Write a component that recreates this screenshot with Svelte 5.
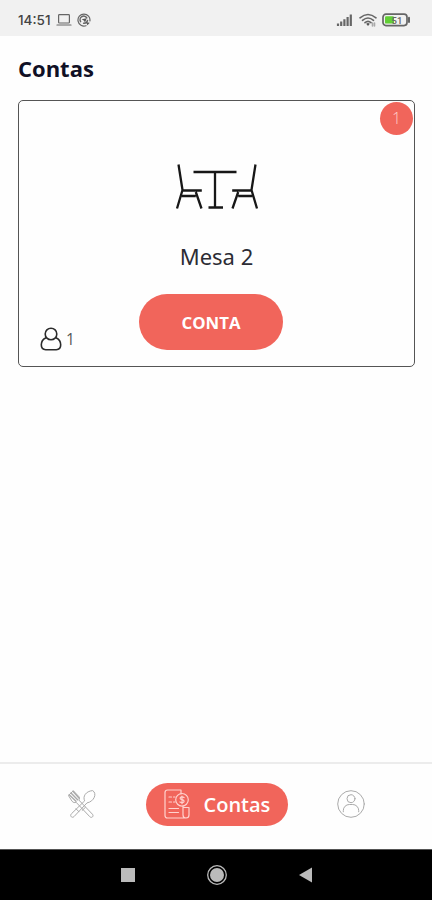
<script lang="ts">
  // Contas: lista de mesas com conta aberta

  type Mesa = { nome: string; pessoas: number; pedidos: number }
  type Aba = 'cardapio' | 'contas' | 'perfil'

  let mesas = $state<Mesa[]>([{ nome: 'Mesa 2', pessoas: 1, pedidos: 1 }])
  let aba = $state<Aba>('contas')
</script>

<div class="screen">
  <!-- Barra de status -->
  <header class="status">
    <span class="time">14:51</span>
    <svg class="laptop" width="16" height="14" viewBox="0 0 16 14">
      <rect x="2.6" y="1.6" width="10.8" height="8.4" rx="0.8" />
      <path d="M1 12h14" />
    </svg>
    <svg class="sync" width="14" height="14" viewBox="0 0 14 14">
      <path d="M9 12.7A6 6 0 1 1 12.9 8" />
      <path class="thick" d="M3.6 8.6A3.6 3.6 0 0 1 9.8 4.8M10.5 7.4A3.6 3.6 0 0 1 6.6 10.3" />
      <path class="solid" d="M4.7 6.2l5-1-1.7 4.5-.9-2zM9.2 9.2l3.6.6-2.4 2.4z" />
    </svg>

    <div class="status-right">
      <svg width="18" height="14" viewBox="0 0 18 14">
        <path class="bars" d="M2 10.5V13M5.2 8.5V13M8.4 6.3V13M11.6 4V13M14.8 1.5V13" />
      </svg>
      <svg class="wifi" width="18" height="14" viewBox="0 0 18 14">
        <path d="M1 4.8Q9-1.8 17 4.8M3.5 7.3Q9 2.7 14.5 7.3M6 9.7Q9 7 12 9.7" />
        <path class="solid" d="M7.2 10.7Q9 9.3 10.8 10.7L9 13z" />
        <path class="faint" d="M13.5 10v3M15.5 10v3" />
      </svg>
      <svg class="battery" width="29" height="14" viewBox="0 0 29 14">
        <rect class="case" x="1" y="1.2" width="24" height="11.4" rx="3" />
        <rect class="level" x="3" y="3.2" width="9" height="7.4" rx="1.2" />
        <path class="tip" d="M27 4.8v4.2" />
        <text x="9.6" y="10.6">51</text>
      </svg>
    </div>
  </header>

  <main>
    <h1>Contas</h1>

    {#each mesas as mesa}
      <article class="card">
        <span class="badge">{mesa.pedidos}</span>

        <svg class="table" width="84" height="48" viewBox="0 0 84 48">
          <path d="M18.5 9h43M40 9v35.500M33.500 44.500h14.500" />
          <path d="M3.500 1.500L7.500 27 2 45.500M6.800 27.500h20M6.800 33h14M20.800 29l5.700 16.500" />
          <path d="M80.500 1.500l-4 25.500L82 45.500M77.200 27.500H57.200M77.200 33h-14M63.200 29L57.500 45.500" />
        </svg>

        <h2>{mesa.nome}</h2>
        <button class="conta">CONTA</button>

        <div class="people">
          <svg width="22" height="24" viewBox="0 0 22 24">
            <circle cx="11" cy="7" r="5.8" />
            <path d="M5.6 10.9C3.2 12 1.3 14.4 1.3 17.8c0 3.3 1.7 4.9 4.4 4.9h10.6c2.7 0 4.4-1.6 4.4-4.9 0-3.4-1.9-5.8-4.3-6.9" />
          </svg>
          <span>{mesa.pessoas}</span>
        </div>
      </article>
    {/each}
  </main>

  <!-- Abas -->
  <nav class="tabs">
    <button class="tab" class:active={aba === 'cardapio'} aria-label="Cardápio" onclick={() => (aba = 'cardapio')}>
      <svg width="28" height="28" viewBox="0 0 28 28">
        <path class="prongs" d="M1.2 4.8l6.8 6.4M3 3l6.6 6.7M5 1.2l6.2 7" />
        <path d="M.7 5.2L5.3.8l5.5 5.7c1 1.4.8 2.6 0 3.500l13.600 14.200c1.800 1.900-.7 4.400-2.600 2.500L8 12.200c-1.600.8-2.700.3-3.600-.6z" />
        <path d="M16.500 10.500c-2-3.800 1.200-9.400 8.200-9.900 4.600 2.800 1.500 11-5.700 12.300L6 26.600c-1.900 1.900-4.700-.7-2.800-2.600z" />
        <path d="M17.400 17.300l-3.200 3.100M8 18.800l3 3" />
      </svg>
    </button>

    <button class="tab pill" class:active={aba === 'contas'} onclick={() => (aba = 'contas')}>
      <svg width="26" height="30" viewBox="0 0 26 30">
        <path d="M17 5V1H3.500C2 1 1 2 1 3.500V26.500C1 28 2 29 3.500 29H22c1.800 0 3-1.200 3-3V18.500h-6V26c0 1.800 1.200 3 3 3M19 18.500V17" />
        <path d="M5 8h2.500M9.500 8h1.500M5 13h2.500M9.500 13h1.500M5 19.500h9.500M5 23.500h9.500" />
        <circle cx="18" cy="10.800" r="6.300" />
        <path d="M20.100 8.500c-1.600-1.200-4-.6-4 .8 0 1.900 4 .9 4 2.900 0 1.500-2.500 1.900-4.200.8M18 7v7.700" />
      </svg>
      <span>Contas</span>
    </button>

    <button class="tab" class:active={aba === 'perfil'} aria-label="Perfil" onclick={() => (aba = 'perfil')}>
      <svg width="28" height="28" viewBox="0 0 28 28">
        <circle cx="14" cy="14" r="13.300" />
        <circle cx="14" cy="8.700" r="4" />
        <path d="M6.300 21.800v-1.300a6 6 0 0 1 6-6h3.400a6 6 0 0 1 6 6v1.300" />
      </svg>
    </button>
  </nav>

  <!-- Botões do sistema -->
  <footer class="system">
    <svg width="20" height="20" viewBox="0 0 20 20"><rect x="3" y="3" width="14" height="14" /></svg>
    <svg width="20" height="20" viewBox="0 0 20 20">
      <circle cx="10" cy="10" r="7" />
      <circle class="ring" cx="10" cy="10" r="9.300" />
    </svg>
    <svg width="20" height="20" viewBox="0 0 20 20"><path d="M3 10L16 2.500V17.500z" /></svg>
  </footer>
</div>

<style>
  :global(body) { background: #fff; }
  .screen {
    display: flex; flex-direction: column; width: 432px; height: 900px; overflow: hidden;
    background: #fefefe; font-family: 'Open Sans', 'Noto Sans', sans-serif; color: #101025;
  }
  svg { display: block; flex-shrink: 0; fill: none; stroke-linecap: round; stroke-linejoin: round; }
  button { border: 0; padding: 0; background: none; font-family: inherit; cursor: pointer; }

  .status {
    display: flex; align-items: center; flex-shrink: 0; box-sizing: border-box;
    height: 36px; padding: 3px 21px 0 18px; background: #f1f1f1;
  }
  .time { width: 38px; font: 500 13.5px/16px Inter, sans-serif; letter-spacing: 0; color: #444; }
  .status svg { stroke: #666; stroke-width: 1.2; }
  .sync { margin-left: 5px; }
  .status .thick { stroke-width: 1.5; }
  .status .solid { fill: #555; stroke: none; }
  .status-right { display: flex; align-items: center; gap: 5px; margin-left: auto; }
  .status .bars { stroke-width: 2.2; stroke-linecap: butt; }
  .faint { stroke: #aaa; }
  .status .wifi { stroke-width: 1.6; }
  .battery .case { stroke-width: 1.7; }
  .battery .level { fill: #62cf35; stroke: none; }
  .battery .tip { stroke-width: 2; }
  .battery text { font: 500 9.5px Roboto, sans-serif; fill: #666; stroke: none; }

  main { flex: 1; padding: 17px 17px 0 18px; }
  h1 { margin: 0 0 17px; font-size: 22px; line-height: 30px; font-weight: 700; }

  .card {
    position: relative; display: flex; flex-direction: column; align-items: center;
    box-sizing: border-box; height: 267px; padding-top: 62px;
    border: 1.5px solid #555; border-radius: 5px;
  }
  .badge {
    position: absolute; top: 1px; right: 1px; width: 33px; height: 33px; border-radius: 50%;
    background: #f1655b; color: #ffd0cb; font-size: 16px; line-height: 33px; text-align: center; font-weight: 300;
  }
  .table { stroke: #171717; stroke-width: 2.3; stroke-linecap: butt; }
  h2 { margin: 29px 0 22px; font: 400 22px/32px 'Noto Sans', sans-serif; color: #2c2c34; }
  .conta {
    width: 144px; height: 56px; margin-right: 11px; border-radius: 28px; background: #f1655b;
    color: #fff; font-size: 16.8px; font-weight: 700;
  }
  .people { position: absolute; left: 21px; bottom: 15px; display: flex; align-items: center; gap: 4px; }
  .people svg { stroke: #2b2b2b; stroke-width: 1.6; }
  .people span { font-size: 15.5px; line-height: 24px; color: #555; }

  .tabs {
    display: flex; align-items: center; justify-content: space-between; flex-shrink: 0;
    box-sizing: border-box; height: 87px; padding: 0 67px 5px 68px; border-top: 2px solid #ececec;
  }
  .tab svg { stroke: #aaa; stroke-width: 1; }
  .tab .prongs { stroke-width: 1.4; }
  .pill {
    display: flex; align-items: center; gap: 14px; box-sizing: border-box;
    width: 142px; height: 43px; padding-left: 18px; border-radius: 22px;
    color: #fff; font-size: 20px; font-weight: 600;
  }
  .pill.active { background: #f1655b; }
  .pill svg { stroke: #ffd2ce; stroke-width: 1.2; }

  .system {
    display: flex; align-items: center; justify-content: center; gap: 69px; flex-shrink: 0;
    box-sizing: border-box; height: 51px; padding-left: 2px; border-top: 1px solid #555; background: #000;
  }
  .system svg { fill: #bbb; }
  .system .ring { fill: none; stroke: #bbb; stroke-width: 1.3; }
</style>
